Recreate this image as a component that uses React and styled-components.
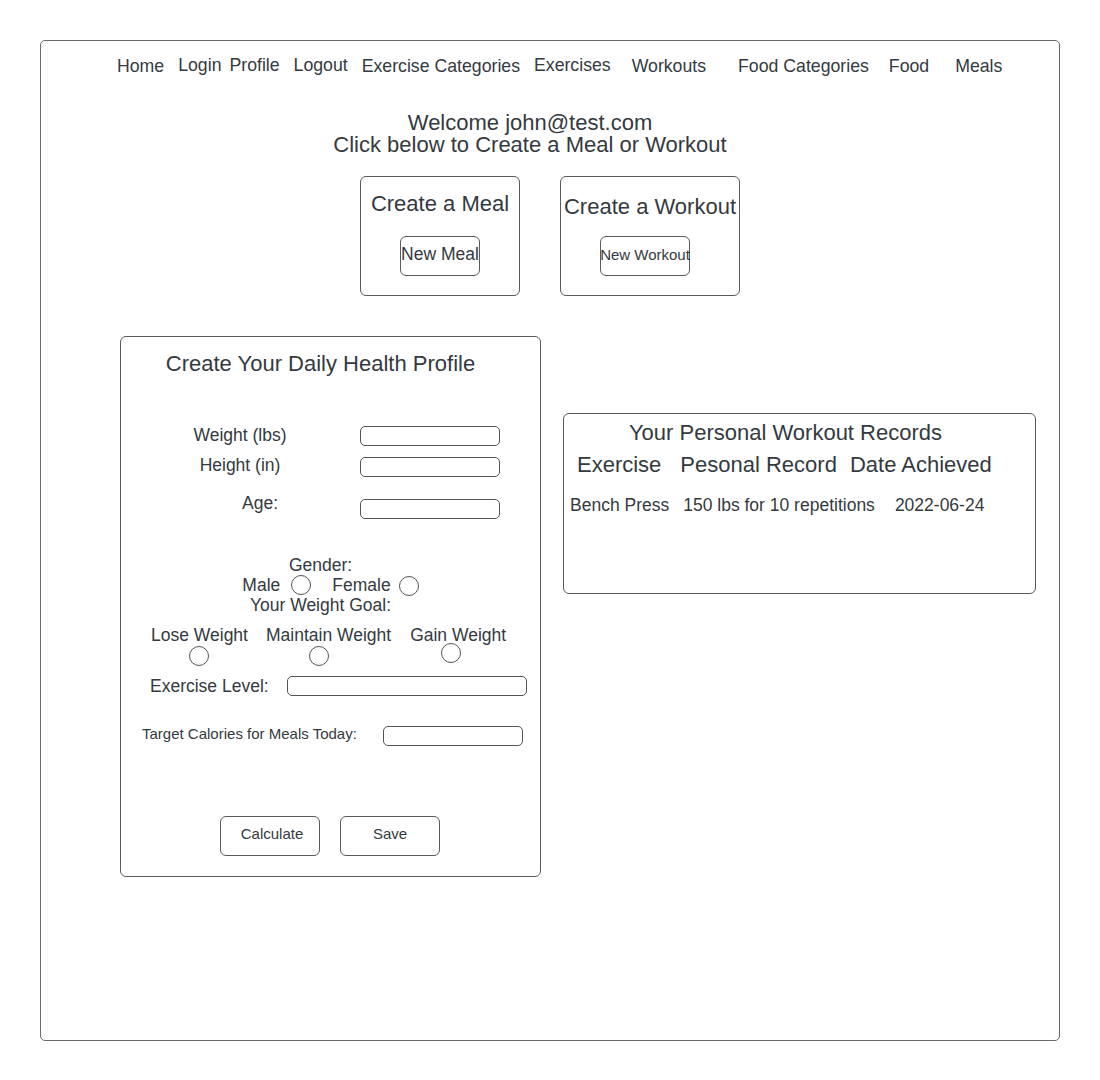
import React from 'react';
import styled, { createGlobalStyle } from 'styled-components';

const GlobalStyle = createGlobalStyle`
  body {
    margin: 0;
    background: #ffffff;
    font-family: "Liberation Sans", Arial, sans-serif;
    color: #343a40;
  }
  * {
    box-sizing: border-box;
  }
`;

const Frame = styled.div`
  margin: 40px 0 0 40px;
  width: 1020px;
  height: 1001px;
  border: 1px solid #6a6a6a;
  border-radius: 5px;
`;

const NavBar = styled.ul`
  display: flex;
  margin: 0;
  padding: 15px 0 0 76px;
  list-style: none;
  height: 35px;
  li {
    font-size: 17.7px;
    line-height: 20px;
    white-space: nowrap;
  }
`;

const NavItem = styled.li`
  margin-left: ${(p) => p.$gap || 0}px;
  margin-top: ${(p) => (p.$lift ? -1 : 0)}px;
`;

const Welcome = styled.div`
  margin-top: 36px;
  padding-right: 40px;
  text-align: center;
  font-size: 22px;
  line-height: 22px;
  div {
    white-space: nowrap;
  }
`;

const ActionRow = styled.div`
  display: flex;
  justify-content: center;
  gap: 40px;
  margin-top: 20px;
`;

const ActionCard = styled.div`
  width: ${(p) => p.$width}px;
  height: 120px;
  border: 1px solid #5a5a5a;
  border-radius: 6px;
  display: flex;
  flex-direction: column;
  align-items: center;
`;

const ActionTitle = styled.div`
  height: 59px;
  padding-top: ${(p) => p.$drop}px;
  font-size: 22px;
  line-height: 26px;
  white-space: nowrap;
`;

const ActionButton = styled.button`
  width: ${(p) => p.$width}px;
  height: 40px;
  margin-right: ${(p) => p.$pull || 0}px;
  padding: 0 0 3px;
  border: 1px solid #5a5a5a;
  border-radius: 6px;
  background: #fff;
  color: #343a40;
  font-family: "Liberation Sans", Arial, sans-serif;
  font-size: ${(p) => p.$size}px;
  white-space: nowrap;
  display: flex;
  align-items: center;
  justify-content: center;
  overflow: visible;
`;

const Lower = styled.div`
  display: flex;
  align-items: flex-start;
  gap: 22px;
  margin: 40px 0 0 79px;
`;

const ProfileCard = styled.form`
  width: 421px;
  height: 541px;
  border: 1px solid #5a5a5a;
  border-radius: 6px;
  font-size: 17.5px;
`;

const CardTitle = styled.h2`
  margin: ${(p) => p.$top}px 0 0;
  padding-right: ${(p) => p.$right}px;
  text-align: center;
  font-size: 22px;
  font-weight: normal;
  line-height: 26px;
  white-space: nowrap;
`;

const Field = styled.div`
  display: flex;
  align-items: flex-start;
  margin-top: ${(p) => p.$gap}px;
  margin-left: ${(p) => p.$indent || 0}px;
`;

const FieldLabel = styled.label`
  width: ${(p) => (p.$width ? `${p.$width}px` : 'auto')};
  padding-left: ${(p) => p.$shift || 0}px;
  margin-top: ${(p) => p.$dy || 0}px;
  text-align: center;
  font-size: ${(p) => p.$size || 17.5}px;
  line-height: 20px;
  white-space: nowrap;
`;

const TextBox = styled.input`
  width: ${(p) => p.$width}px;
  height: 20px;
  margin-left: ${(p) => p.$gap}px;
  padding: 0;
  border: 1px solid #555;
  border-radius: 5px;
  background: #fff;
`;

const CenterLine = styled.div`
  padding-right: ${(p) => p.$right || 0}px;
  text-align: center;
  line-height: 20px;
  margin-top: ${(p) => p.$top || 0}px;
`;

const ChoiceRow = styled.div`
  display: flex;
  align-items: center;
  justify-content: center;
  height: 20px;
`;

const ChoiceText = styled.span`
  margin-left: ${(p) => p.$gap || 0}px;
  line-height: 20px;
`;

const Radio = styled.span`
  display: block;
  width: 20px;
  height: 20px;
  border: 1px solid #555;
  border-radius: 50%;
  margin-left: ${(p) => p.$gap || 0}px;
  margin-top: ${(p) => p.$dy || 0}px;
`;

const GoalRow = styled.div`
  display: flex;
  align-items: flex-start;
  margin: 10px 0 0 30px;
`;

const GoalOption = styled.div`
  display: flex;
  flex-direction: column;
  align-items: center;
  margin-left: ${(p) => p.$gap || 0}px;
  span {
    line-height: 20px;
    white-space: nowrap;
  }
`;

const ButtonRow = styled.div`
  display: flex;
  gap: 20px;
  margin: 70px 0 0 99px;
`;

const FormButton = styled.button`
  width: 100px;
  height: 40px;
  padding: 0 0 6px ${(p) => p.$nudge || 0}px;
  border: 1px solid #5a5a5a;
  border-radius: 6px;
  background: #fff;
  color: #343a40;
  font-family: "Liberation Sans", Arial, sans-serif;
  font-size: 15px;
`;

const RecordsCard = styled.div`
  width: 473px;
  height: 181px;
  margin-top: 77px;
  border: 1px solid #5a5a5a;
  border-radius: 6px;
`;

const RecordRow = styled.div`
  display: flex;
  margin-top: ${(p) => p.$top}px;
  font-size: ${(p) => p.$size}px;
  line-height: ${(p) => p.$line}px;
  white-space: nowrap;
`;

const Cell = styled.span`
  margin-left: ${(p) => p.$gap}px;
`;

const navLinks = [
  { label: 'Home', gap: 0 },
  { label: 'Login', gap: 14, lift: true },
  { label: 'Profile', gap: 8, lift: true },
  { label: 'Logout', gap: 14, lift: true },
  { label: 'Exercise Categories', gap: 14 },
  { label: 'Exercises', gap: 14, lift: true },
  { label: 'Workouts', gap: 21 },
  { label: 'Food Categories', gap: 32 },
  { label: 'Food', gap: 20 },
  { label: 'Meals', gap: 26 },
];

const App = () => {
  return (
    <>
      <GlobalStyle />
      <Frame>
        <NavBar>
          {navLinks.map((link) => (
            <NavItem key={link.label} $gap={link.gap} $lift={link.lift}>
              {link.label}
            </NavItem>
          ))}
        </NavBar>

        <Welcome>
          <div>Welcome john@test.com</div>
          <div>Click below to Create a Meal or Workout</div>
        </Welcome>

        <ActionRow>
          <ActionCard $width={160}>
            <ActionTitle $drop={14}>Create a Meal</ActionTitle>
            <ActionButton $width={80} $size={17.5}>New Meal</ActionButton>
          </ActionCard>
          <ActionCard $width={180}>
            <ActionTitle $drop={17}>Create a Workout</ActionTitle>
            <ActionButton $width={90} $size={15} $pull={10}>New Workout</ActionButton>
          </ActionCard>
        </ActionRow>

        <Lower>
          <ProfileCard onSubmit={(e) => e.preventDefault()}>
            <CardTitle $top={14} $right={20}>Create Your Daily Health Profile</CardTitle>

            <Field $gap={49} $indent={39}>
              <FieldLabel $width={160} $dy={-1}>Weight (lbs)</FieldLabel>
              <TextBox $width={140} $gap={40} />
            </Field>
            <Field $gap={11} $indent={39}>
              <FieldLabel $width={160} $dy={-2}>Height (in)</FieldLabel>
              <TextBox $width={140} $gap={40} />
            </Field>
            <Field $gap={22} $indent={39}>
              <FieldLabel $width={160} $shift={40} $dy={-6}>Age:</FieldLabel>
              <TextBox $width={140} $gap={40} />
            </Field>

            <CenterLine $top={36} $right={20}>Gender:</CenterLine>
            <ChoiceRow>
              <ChoiceText>Male</ChoiceText>
              <Radio $gap={11} />
              <ChoiceText $gap={21}>Female</ChoiceText>
              <Radio $gap={8} $dy={1} />
            </ChoiceRow>
            <CenterLine $right={20}>Your Weight Goal:</CenterLine>

            <GoalRow>
              <GoalOption>
                <span>Lose Weight</span>
                <Radio $dy={1} />
              </GoalOption>
              <GoalOption $gap={18}>
                <span>Maintain Weight</span>
                <Radio $gap={-20} $dy={1} />
              </GoalOption>
              <GoalOption $gap={19}>
                <span>Gain Weight</span>
                <Radio $gap={-14} $dy={-2} />
              </GoalOption>
            </GoalRow>

            <Field $gap={10} $indent={29}>
              <FieldLabel>Exercise Level:</FieldLabel>
              <TextBox $width={240} $gap={18} />
            </Field>
            <Field $gap={30} $indent={21}>
              <FieldLabel $size={15} $dy={-2}>Target Calories for Meals Today:</FieldLabel>
              <TextBox $width={140} $gap={26} />
            </Field>

            <ButtonRow>
              <FormButton type="button" $nudge={4}>Calculate</FormButton>
              <FormButton type="button">Save</FormButton>
            </ButtonRow>
          </ProfileCard>

          <RecordsCard>
            <CardTitle $top={6} $right={28}>Your Personal Workout Records</CardTitle>
            <RecordRow $top={6} $size={22} $line={26}>
              <Cell $gap={13}>Exercise</Cell>
              <Cell $gap={19}>Pesonal Record</Cell>
              <Cell $gap={13}>Date Achieved</Cell>
            </RecordRow>
            <RecordRow $top={17} $size={17.5} $line={20}>
              <Cell $gap={6}>Bench Press</Cell>
              <Cell $gap={14}>150 lbs for 10 repetitions</Cell>
              <Cell $gap={20}>2022-06-24</Cell>
            </RecordRow>
          </RecordsCard>
        </Lower>
      </Frame>
    </>
  );
};

export default App;
